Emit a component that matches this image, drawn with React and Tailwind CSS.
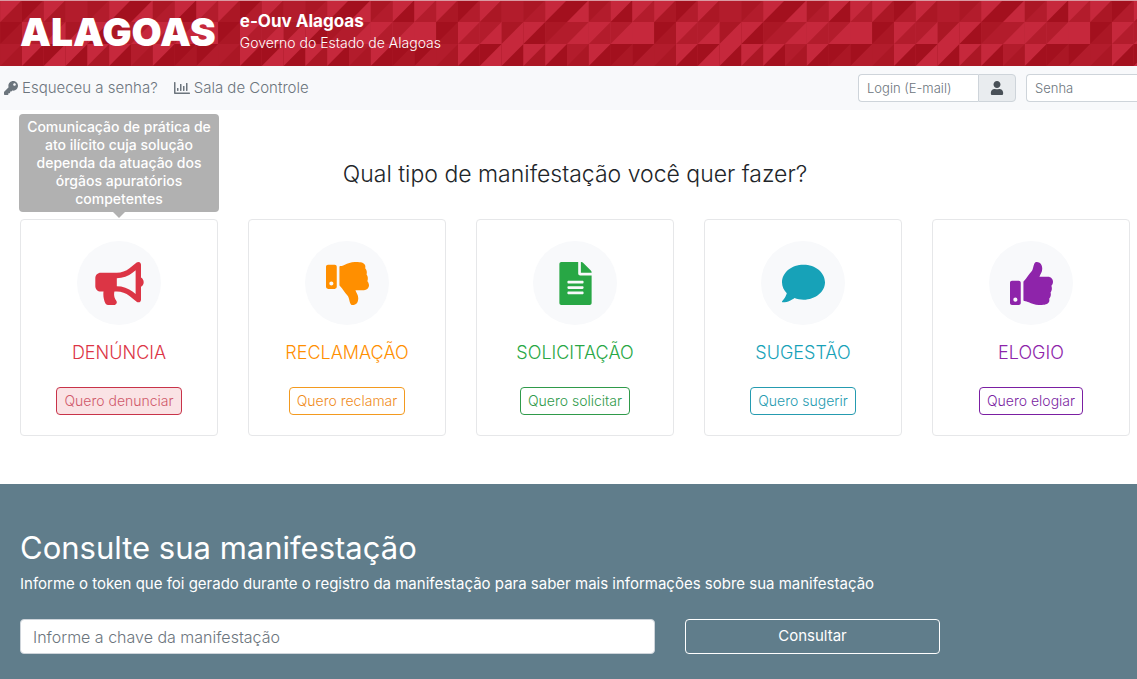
import {
  FaBullhorn,
  FaComment,
  FaFileAlt,
  FaKey,
  FaRegChartBar,
  FaThumbsDown,
  FaThumbsUp,
  FaUser,
} from 'react-icons/fa';

const SHADES = { L: '#c6283c', M: '#b31c2c', A: '#ab1725', D: '#a3101e' };

// Two shades per tile: upper-left triangle, lower-right triangle
const TILES = [
  ['DM', 'LA', 'MM', 'AM', 'LD', 'DL', 'AM', 'LD', 'LM', 'LA'],
  ['LM', 'ML', 'AL', 'LD', 'AM', 'ML', 'LM', 'ML', 'LL', 'DA'],
  ['LD', 'DL', 'LD', 'LA', 'LD', 'MA', 'LD', 'DA', 'DM', 'MA'],
];

const CARDS = [
  {
    title: 'DENÚNCIA',
    action: 'Quero denunciar',
    Icon: FaBullhorn,
    text: 'text-[#dc3545]',
    button: 'border-[#c83349] text-[#d0596a] bg-[#fae3e5]',
    tooltip: [
      'Comunicação de prática de',
      'ato ilícito cuja solução',
      'dependa da atuação dos',
      'órgãos apuratórios',
      'competentes',
    ],
  },
  {
    title: 'RECLAMAÇÃO',
    action: 'Quero reclamar',
    Icon: FaThumbsDown,
    text: 'text-[#ff8f00]',
    button: 'border-[#f39a1f] text-[#f08c1c] bg-white',
  },
  {
    title: 'SOLICITAÇÃO',
    action: 'Quero solicitar',
    Icon: FaFileAlt,
    text: 'text-[#28a745]',
    button: 'border-[#2f9a4a] text-[#2f9a4a] bg-white',
  },
  {
    title: 'SUGESTÃO',
    action: 'Quero sugerir',
    Icon: FaComment,
    text: 'text-[#17a2b8]',
    button: 'border-[#259bb0] text-[#259bb0] bg-white',
  },
  {
    title: 'ELOGIO',
    action: 'Quero elogiar',
    Icon: FaThumbsUp,
    text: 'text-[#8e24aa]',
    button: 'border-[#7b1fa2] text-[#7b1fa2] bg-white',
  },
];

function Mosaic() {
  return (
    <svg className="absolute inset-0 w-full h-full" aria-hidden="true">
      <defs>
        <pattern id="mosaic" x="22" y="-1" width="218" height="66" patternUnits="userSpaceOnUse">
          {TILES.map((row, r) =>
            row.map((tile, c) => (
              <g key={`${r}-${c}`} transform={`translate(${c * 21.8} ${r * 22})`}>
                <rect width="22" height="22" fill={SHADES[tile[1]]} />
                <path d="M0 0H21.8L0 22Z" fill={SHADES[tile[0]]} />
              </g>
            ))
          )}
        </pattern>
      </defs>
      <rect width="100%" height="100%" fill="url(#mosaic)" />
    </svg>
  );
}

function Header() {
  return (
    <header className="relative h-[66px] border-t border-[#d99aa2] bg-[#b31c2c] text-white">
      <Mosaic />
      <div className="relative flex h-full items-center gap-6 px-5 pb-1">
        <a href="#inicio" className="text-[39px] leading-10 font-black">ALAGOAS</a>
        <div>
          <p className="text-[17px] leading-[22px] font-bold">e-Ouv Alagoas</p>
          <p className="text-sm leading-[22px]">Governo do Estado de Alagoas</p>
        </div>
      </div>
    </header>
  );
}

function Navbar() {
  return (
    <nav className="flex h-11 items-center bg-[#f8f9fb] pl-1 text-[15px] text-[#6c757d]">
      <a href="#senha" className="flex items-center gap-1">
        <FaKey size={14} /> Esqueceu a senha?
      </a>
      <a href="#controle" className="ml-4 flex items-center gap-1">
        <FaRegChartBar size={16} /> Sala de Controle
      </a>
      <form className="ml-auto flex text-[13px]">
        <input
          type="text"
          aria-label="Login (E-mail)"
          placeholder="Login (E-mail)"
          className="h-7 w-[120px] rounded-l-sm border border-r-0 border-[#ced4da] bg-white px-2 placeholder:text-[#6c757d]"
        />
        <span className="flex h-7 w-[38px] items-center justify-center rounded-r-sm border border-[#ced4da] bg-[#e9ecef] text-[#495057]">
          <FaUser size={14} />
        </span>
        <input
          type="password"
          aria-label="Senha"
          placeholder="Senha"
          className="ml-2.5 h-7 w-[111px] rounded-l-sm border border-r-0 border-[#ced4da] bg-white px-2 placeholder:text-[#6c757d]"
        />
      </form>
    </nav>
  );
}

function Tooltip({ lines }) {
  return (
    <div
      role="tooltip"
      className="absolute bottom-full left-1/2 mb-2 w-[200px] -translate-x-1/2 rounded bg-[#b1b1b1] py-1 text-center text-sm leading-[18px] font-medium text-white"
    >
      {lines.map((line) => (
        <span key={line} className="block whitespace-nowrap">{line}</span>
      ))}
      <span className="absolute top-full left-1/2 -translate-x-1/2 border-x-[6px] border-t-[6px] border-x-transparent border-t-[#b1b1b1]" />
    </div>
  );
}

function Card({ title, action, Icon, text, button, tooltip }) {
  return (
    <article className="relative flex flex-col items-center rounded border border-[#e6e7e9] bg-white pt-[21px] pb-5">
      {tooltip && <Tooltip lines={tooltip} />}
      <div className={`flex h-[84px] w-[84px] items-center justify-center rounded-full bg-[#f8f9fb] ${text}`}>
        <Icon className="h-[43px] w-[49px]" />
      </div>
      <h3 className={`mt-4 text-lg leading-6 font-light ${text}`}>{title}</h3>
      <button type="button" className={`mt-[22px] h-7 rounded-sm border px-[7px] text-sm ${button}`}>
        {action}
      </button>
    </article>
  );
}

export default function App() {
  return (
    <div className="flex min-h-screen flex-col overflow-x-hidden bg-white font-['Inter',sans-serif] font-light text-[#212529]">
      <Header />
      <Navbar />

      <main className="flex flex-1 flex-col">
        <section className="pt-12 pr-[7px] pb-12 pl-5">
          <h2 className="mb-[29px] text-center text-[23px] leading-8 font-light">
            Qual tipo de manifestação você quer fazer?
          </h2>
          <div className="grid grid-cols-5 gap-[30px]">
            {CARDS.map((card) => (
              <Card key={card.title} {...card} />
            ))}
          </div>
        </section>

        <section className="flex-1 bg-[#607d8b] pt-[46px] pr-[7px] pb-6 pl-5 text-white">
          <h2 className="text-[31px] leading-9 font-normal">Consulte sua manifestação</h2>
          <label htmlFor="chave" className="mt-2 block text-[15px] leading-5 font-normal">
            Informe o token que foi gerado durante o registro da manifestação para saber mais informações sobre sua manifestação
          </label>
          <form className="mt-[25px] grid grid-cols-12 gap-x-[30px]">
            <input
              id="chave"
              type="text"
              placeholder="Informe a chave da manifestação"
              className="col-span-7 h-[35px] rounded border border-[#ced4da] bg-white px-3 text-base text-[#495057] placeholder:text-[#6c757d]"
            />
            <button type="button" className="col-span-3 h-[35px] rounded border border-white text-[15px] font-normal">
              Consultar
            </button>
          </form>
        </section>
      </main>
    </div>
  );
}
